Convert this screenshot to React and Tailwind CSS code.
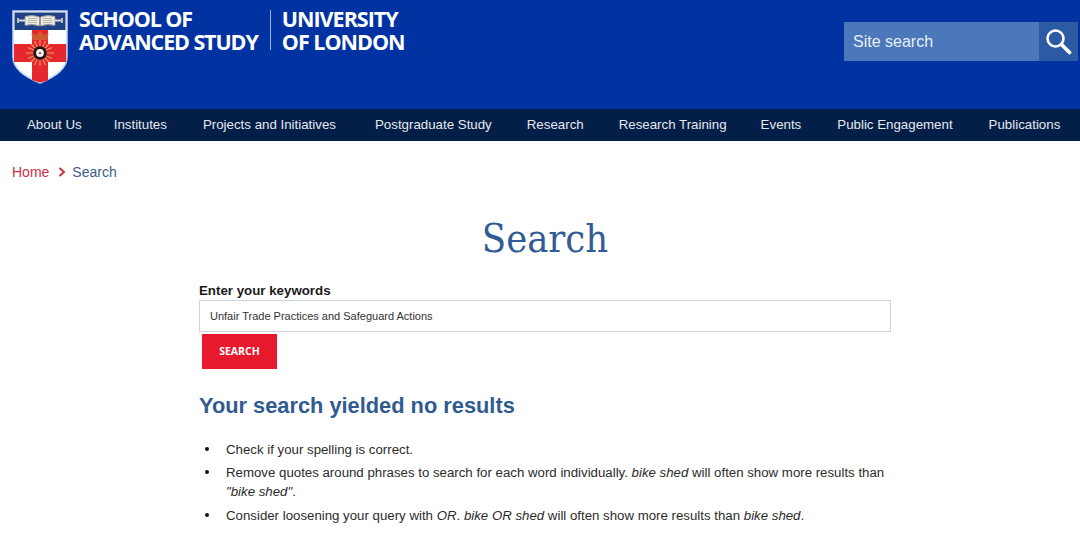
import React from 'react';

const navItems = [
  { label: 'About Us', className: '' },
  { label: 'Institutes', className: 'ml-[32px]' },
  { label: 'Projects and Initiatives', className: 'ml-[36px]' },
  { label: 'Postgraduate Study', className: 'ml-[39px]' },
  { label: 'Research', className: 'ml-[35px]' },
  { label: 'Research Training', className: 'ml-[35px]' },
  { label: 'Events', className: 'ml-[34px]' },
  { label: 'Public Engagement', className: 'ml-[36px]' },
  { label: 'Publications', className: 'ml-[36px]' },
];

function Shield() {
  return (
    <svg width="56" height="74" viewBox="0 0 56 74" className="shrink-0">
      <path d="M1 1H55V47C55 59 43 67 28 73C13 67 1 59 1 47Z" fill="#fff" stroke="#c6d3ec" strokeWidth="1.5" />
      <path d="M2.5 2.5H53.5V20H2.5Z" fill="#1f4186" />
      {/* book */}
      <path d="M13 6.5Q20 4.5 27.5 7V16Q20 13.5 13 15.5ZM28.5 7Q36 4.5 43 6.5V15.5Q36 13.5 28.5 16Z" fill="#ece9df" stroke="#9a9890" strokeWidth="0.8" />
      <path d="M16 8.5H25M16 10.5H25M16 12.5H25M31 8.5H40M31 10.5H40M31 12.5H40" stroke="#a3a29c" strokeWidth="0.7" />
      <path d="M7 10.5H13M43 10.5H49" stroke="#dedcd3" strokeWidth="2.2" />
      <path d="M6 8V13M50 8V13" stroke="#dedcd3" strokeWidth="1.6" />
      {/* cross */}
      <path d="M20 20H36V34H54.2V52H36V70.5L28 72.5L20 70V52H2V34H20Z" fill="#e5272e" />
      {/* crown */}
      <path d="M20.5 30L19.5 23L24 25.5L28 21L32 25.5L36.5 23L35.5 30Z" fill="#cf5a34" />
      {/* sunburst */}
      <g stroke="#f4995c" strokeWidth="1.1">
        <path d="M28 30V56M14 43H42M18.5 33.5L37.5 52.5M37.5 33.5L18.5 52.5M22.5 31L33.5 55M33.5 31L22.5 55M16 37.5L40 48.5M40 37.5L16 48.5" />
      </g>
      <circle cx="28" cy="43" r="6.8" fill="#23151a" />
      <circle cx="28" cy="43" r="3.9" fill="#f6f1ea" />
      <circle cx="28" cy="43" r="1.1" fill="#8a3a34" />
    </svg>
  );
}

export default function App() {
  return (
    <div className="h-[538px] overflow-hidden bg-white font-['Liberation_Sans',Arial,sans-serif]">
      {/* Header */}
      <header className="h-[109px] bg-[#0033a1] flex items-start justify-between pl-3 pr-[2px]">
        <div className="flex items-start pt-[10px]">
          <Shield />
          <div className="ml-[11px] -mt-[2px] font-['Open_Sans',sans-serif] font-bold text-white text-[21.5px] leading-[22.5px] tracking-[-1.1px] whitespace-nowrap">
            <div>SCHOOL OF</div>
            <div>ADVANCED STUDY</div>
          </div>
          <div className="w-px h-[40px] bg-[#9fb4de] ml-[12px]" />
          <div className="ml-[11px] -mt-[2px] font-['Open_Sans',sans-serif] font-bold text-white text-[21.5px] leading-[22.5px] tracking-[-1px] whitespace-nowrap">
            <div>UNIVERSITY</div>
            <div>OF LONDON</div>
          </div>
        </div>
        <div className="flex mt-[22px] h-[39px]">
          <div className="w-[195px] bg-[#4a78ba] flex items-center pl-[9px] text-[#e8eef8] text-[16px]">Site search</div>
          <div className="w-[39px] bg-[#2c5aa3] flex items-center justify-center">
            <svg width="27" height="27" viewBox="0 0 27 27">
              <circle cx="10.5" cy="10.5" r="8" fill="none" stroke="#fff" strokeWidth="2.6" />
              <path d="M16.5 16.5L24.5 24.5" stroke="#fff" strokeWidth="3.8" strokeLinecap="round" />
            </svg>
          </div>
        </div>
      </header>

      {/* Nav */}
      <nav className="h-[32px] bg-[#031e47] flex items-center pl-[27px] text-[#e6e9ef] text-[13.3px]">
        {navItems.map((item) => (
          <a key={item.label} className={`whitespace-nowrap ${item.className}`}>{item.label}</a>
        ))}
      </nav>

      {/* Breadcrumb */}
      <div className="flex items-center pl-3 pt-[23px] text-[14px] leading-4">
        <span className="text-[#c8323f]">Home</span>
        <svg width="8" height="10" viewBox="0 0 8 10" className="ml-[9px] mr-[6px]">
          <path d="M1.5 1L6 5L1.5 9" fill="none" stroke="#c8323f" strokeWidth="2" />
        </svg>
        <span className="text-[#3d5a8a]">Search</span>
      </div>

      {/* Main */}
      <main className="w-[692px] ml-[199px]">
        <h1 className="mt-[29px] text-center font-['DejaVu_Serif',serif] [font-stretch:condensed] font-normal text-[#315b96] text-[39.5px] leading-[58px]">Search</h1>
        <label className="block mt-[16px] text-[13.3px] leading-[16px] font-bold text-[#1a1a1a]">Enter your keywords</label>
        <div className="mt-[1px] h-[32px] border border-[#ccd6de] flex items-center pl-[10px] text-[11px] text-[#333]">
          Unfair Trade Practices and Safeguard Actions
        </div>
        <button className="block mt-[2px] ml-[3px] w-[75px] h-[35px] bg-[#e8192c] text-white text-[10.5px] font-bold font-['Open_Sans',sans-serif]">SEARCH</button>
        <h2 className="mt-[23px] text-[21.8px] leading-[28px] font-bold text-[#315b8f]">Your search yielded no results</h2>
        <ul className="mt-[20px] text-[13.25px] leading-[19px] text-[#2b2b2b]">
          <li className="flex mb-[4px]">
            <span className="w-[27px] shrink-0 pl-[6px] pt-[7px]"><span className="block w-[4px] h-[4px] rounded-full bg-[#111]" /></span>
            <span>Check if your spelling is correct.</span>
          </li>
          <li className="flex mb-[5px]">
            <span className="w-[27px] shrink-0 pl-[6px] pt-[7px]"><span className="block w-[4px] h-[4px] rounded-full bg-[#111]" /></span>
            <span>Remove quotes around phrases to search for each word individually. <em>bike shed</em> will often show more results than <em>"bike shed"</em>.</span>
          </li>
          <li className="flex">
            <span className="w-[27px] shrink-0 pl-[6px] pt-[7px]"><span className="block w-[4px] h-[4px] rounded-full bg-[#111]" /></span>
            <span>Consider loosening your query with <em>OR</em>. <em>bike OR shed</em> will often show more results than <em>bike shed</em>.</span>
          </li>
        </ul>
      </main>
    </div>
  );
}
